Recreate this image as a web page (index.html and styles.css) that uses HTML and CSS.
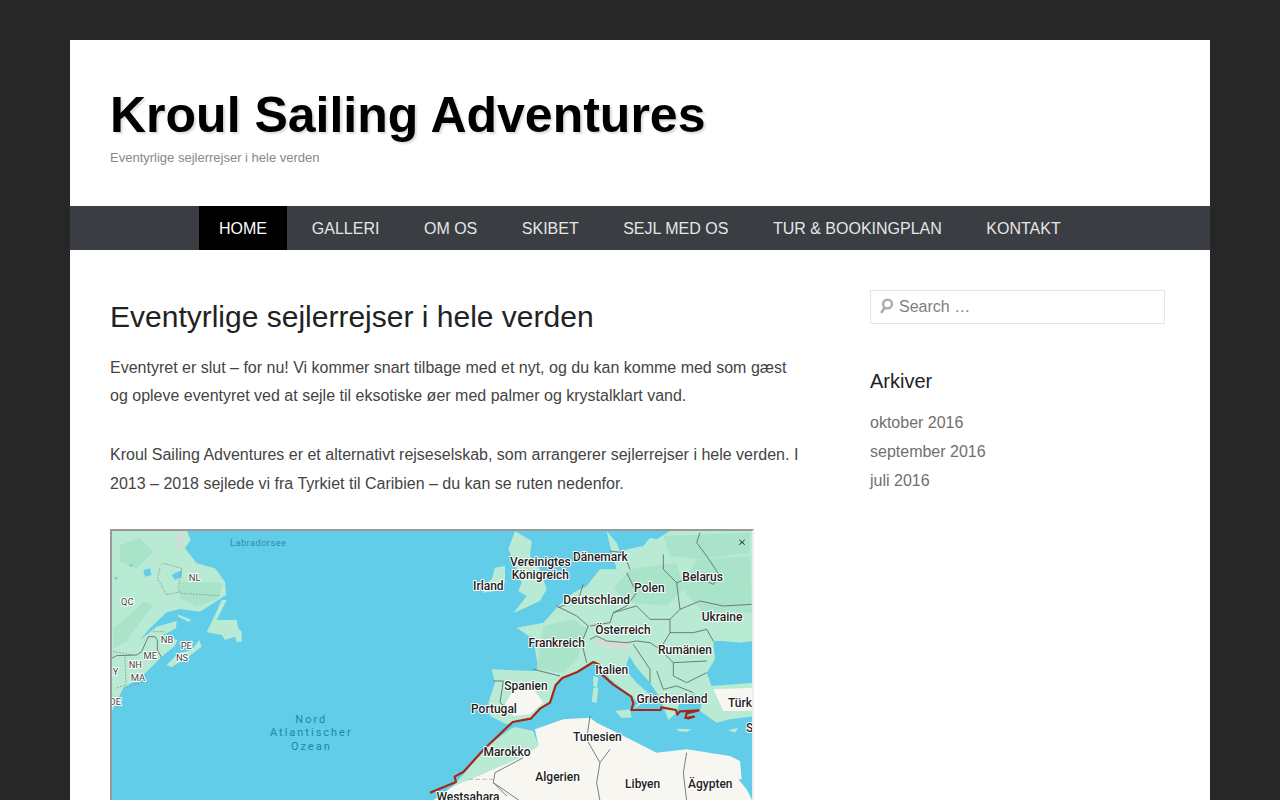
FILE: index.html
```html
<!DOCTYPE html>
<html lang="da">
<head>
<meta charset="utf-8">
<title>Kroul Sailing Adventures</title>
<link rel="stylesheet" href="styles.css">
</head>
<body>
<div class="page">
  <header class="masthead">
    <h1 class="site-title">Kroul Sailing Adventures</h1>
    <p class="site-desc">Eventyrlige sejlerrejser i hele verden</p>
  </header>
  <nav class="nav">
    <a class="nav-item active" href="#">HOME</a>
    <a class="nav-item" href="#">GALLERI</a>
    <a class="nav-item" href="#">OM OS</a>
    <a class="nav-item" href="#">SKIBET</a>
    <a class="nav-item" href="#">SEJL MED OS</a>
    <a class="nav-item" href="#">TUR &amp; BOOKINGPLAN</a>
    <a class="nav-item" href="#">KONTAKT</a>
  </nav>
  <div class="content">
    <main class="main">
      <h2 class="entry-title">Eventyrlige sejlerrejser i hele verden</h2>
      <p class="para">Eventyret er slut – for nu! Vi kommer snart tilbage med et nyt, og du kan komme med som gæst og opleve eventyret ved at sejle til eksotiske øer med palmer og krystalklart vand.</p>
      <p class="para">Kroul Sailing Adventures er et alternativt rejseselskab, som arrangerer sejlerrejser i hele verden. I 2013 – 2018 sejlede vi fra Tyrkiet til Caribien – du kan se ruten nedenfor.</p>
      <div class="map-frame">
      <svg class="map" viewBox="0 0 640 478" xmlns="http://www.w3.org/2000/svg">
        <rect class="water" width="640" height="478"/>
        <g transform="translate(-12,-6) scale(.33333)">
          <g class="soft">
            <path class="land" d="M35 15H260L272 45 255 70 290 115 345 130 375 170 378 210 355 225 300 260 240 252 200 262 150 310 120 345 170 305 230 288 228 310 180 335 232 345 225 362 185 395 130 450 70 490 35 560Z"/>
            <path class="land" d="M200 420 235 385 275 375 298 345 305 365 265 395 215 427Z"/>
            <path class="land" d="M238 352 265 352 262 362 240 360Z"/>
            <path class="land" d="M365 225 380 225 350 285 410 285 415 310 425 320 425 350 410 350 405 335 375 345 365 330 320 322 345 270Z"/>
            <path class="land" d="M232 268 275 285 265 290 235 275Z"/>
            <path class="land2" d="M40 310 100 260 130 230 160 240 120 290 80 350 40 370Z"/>
            <path class="land2" d="M240 170 300 170 370 175 355 220 290 245 240 220Z"/>
            <path class="land2" d="M60 60 120 40 160 80 110 130 60 110Z"/>
          </g>
          <path class="lake" d="M130 135 150 130 155 150 135 155ZM215 150 245 135 245 155 225 165ZM40 158 52 155 50 165ZM85 120 100 118 96 126Z"/>
          <path class="rock" d="M232 25 250 22 250 50 240 75 230 55Z"/>
          <path class="bdr-d" d="M185 120 190 115 245 130 235 190 240 205 360 212M180 130 172 160 200 210 240 200M40 380 100 390M75 395 78 480 45 490M70 490 130 470M160 320 195 320"/>
          <path class="bdr" d="M35 400 50 392 110 390 125 380 145 335 165 335 172 345 172 375 185 398"/>
          <text class="t-small" x="390" y="63" textLength="168">Labradorsee</text>
          <text class="t-ocean" x="634" y="595">Nord</text>
          <text class="t-ocean" x="634" y="634">Atlantischer</text>
          <text class="t-ocean" x="634" y="674">Ozean</text>
          <text class="t-st" x="82" y="241">QC</text>
          <text class="t-st" x="284" y="168">NL</text>
          <text class="t-st" x="201" y="355">NB</text>
          <text class="t-st" x="259" y="373">PE</text>
          <text class="t-st" x="246" y="409">NS</text>
          <text class="t-st" x="151" y="403">ME</text>
          <text class="t-st" x="106" y="430">NH</text>
          <text class="t-st" x="114" y="467">MA</text>
          <text class="t-st" x="43" y="450">IY</text>
          <text class="t-st" x="46" y="541">DE</text>
        </g>
        <g transform="translate(318,-5) scale(.33333)">
          <g class="soft">
            <path class="land" d="M530 15 560 50 575 90 590 70 640 60 660 35 680 40 720 15H975V345L930 350 880 345 850 345 855 400 830 440 845 480 975 470V570L900 580 860 590 810 555 820 510 790 505 750 525 740 560 715 582 690 515 660 470 620 425 598 390 585 430 620 470 670 515 630 505 640 530 610 550 625 530 590 500 540 460 505 420 490 410 445 440 395 455 375 475 360 525 330 545 300 580 255 585 230 595 180 570 175 530 195 470 185 430 310 435 325 430 310 340 260 305 340 290 385 240 430 200 470 180 510 130 560 130 540 60Z"/>
            <path class="land" d="M255 15 305 45 300 90 330 130 350 190 330 225 250 262 290 210 265 195 275 170 260 130 235 70Z"/>
            <path class="land" d="M195 125 225 120 225 170 195 195 160 200 165 175 185 160Z"/>
            <path class="land" d="M490 450 505 455 500 485 490 480ZM490 485 505 485 500 530 485 528Z"/>
            <path class="land" d="M555 555 600 550 605 575 575 575Z"/>
            <path class="land" d="M740 608 785 610 770 618 745 615ZM895 612 925 605 915 620Z"/>
            <path class="land2" d="M600 130 740 110 760 190 710 240 600 230 550 190ZM800 100 960 90 965 260 820 260 750 180ZM340 300 430 280 470 310 440 400 400 440 320 430Z"/>
            <path class="land2" d="M700 30 960 20 960 80 800 100 720 90Z"/>
            <path class="rock" d="M505 335 540 345 605 352 590 370 520 362 495 358Z"/>
            <path class="sand" d="M250 490 315 495 340 530 300 565 250 570 225 535Z"/>
            <path class="sand" d="M850 490 975 485V555H880Z"/>
            <path class="land" d="M240 610 255 603 310 615 325 660 280 690 190 730 120 760 70 780 130 710 160 670Z"/>
            <path class="sand" d="M315 610 400 580 480 575 500 590 540 610 600 640 680 680 770 670 900 690 930 705 935 760 975 830H0L70 780 120 760 190 730 280 690 325 660Z"/>
            <path class="water" d="M925 760 975 760V830H970L950 790Z"/>
          </g>
          <path class="bdr" d="M460 175 445 220 385 245M380 240 440 270 475 300 455 350M455 350 470 410M480 300 540 290 550 260 590 240 620 200 590 140M550 260 620 240 660 280 720 280 750 250 740 170 700 130 700 85M740 170 800 150 850 175 870 150 830 90 800 50 810 20M750 250 810 225 880 240 965 235M720 280 720 320 690 370 660 350 620 345 590 350 530 345 500 330 480 340M720 320 790 320 830 310 850 345M690 370 730 410 830 405M730 410 730 450 770 470 830 440M610 355 660 430 660 470M680 435 700 490 740 480 790 500M310 430 390 450M190 465 220 465 210 530 230 545M540 75 580 80 600 130M480 570 470 640 510 710 500 770 510 825M510 710 540 670M770 680 760 740 770 825M280 695 195 740 190 770 270 825M190 770 230 810"/>
          <path class="bdr-gd" d="M115 760H190"/>
          <path class="bdr-x" d="M928 42 944 56M944 42 928 56"/>
          <path class="route" d="M0 800 78 768 74 752 100 738 162 670 248 588 302 578 330 548 360 530 377 478 397 456 442 438 490 408 508 416 516 446 550 476 604 512 610 532 604 552 692 552 694 544 738 552 742 566 750 556 806 553 770 562 766 576 792 572 772 578"/>
          <text class="t-c" x="331" y="121">Vereinigtes</text>
          <text class="t-c" x="331" y="158">Königreich</text>
          <text class="t-c" x="511" y="106">Dänemark</text>
          <text class="t-c" x="175" y="191">Irland</text>
          <text class="t-c" x="818" y="166">Belarus</text>
          <text class="t-c" x="658" y="197">Polen</text>
          <text class="t-c" x="500" y="233">Deutschland</text>
          <text class="t-c" x="876" y="284">Ukraine</text>
          <text class="t-c" x="579" y="323">Österreich</text>
          <text class="t-c" x="380" y="362">Frankreich</text>
          <text class="t-c" x="765" y="383">Rumänien</text>
          <text class="t-c" x="545" y="443">Italien</text>
          <text class="t-c" x="288" y="491">Spanien</text>
          <text class="t-c" x="726" y="530">Griechenland</text>
          <text class="t-c" x="930" y="542">Türk</text>
          <text class="t-c" x="192" y="560">Portugal</text>
          <text class="t-c" x="959" y="619">S</text>
          <text class="t-c" x="502" y="644">Tunesien</text>
          <text class="t-c" x="231" y="689">Marokko</text>
          <text class="t-c" x="383" y="765">Algerien</text>
          <text class="t-c" x="638" y="785">Libyen</text>
          <text class="t-c" x="841" y="785">Ägypten</text>
          <text class="t-c" x="114" y="826">Westsahara</text>
        </g>
      </svg>
      </div>
    </main>
    <aside class="sidebar">
      <form class="search">
        <svg class="search-icon" viewBox="0 0 14 16" xmlns="http://www.w3.org/2000/svg"><circle cx="8.5" cy="6" r="4.4"/><path d="M5.8 9.5 2.2 15"/></svg>
        <input class="search-input" type="search" placeholder="Search …">
      </form>
      <h3 class="widget-title">Arkiver</h3>
      <ul class="archive">
        <li><a href="#">oktober 2016</a></li>
        <li><a href="#">september 2016</a></li>
        <li><a href="#">juli 2016</a></li>
      </ul>
    </aside>
  </div>
</div>
</body>
</html>
```
FILE: styles.css
```css
html, body { margin: 0; height: 100%; overflow: hidden; }
body { background: #272727; font-family: "Liberation Sans", Arial, sans-serif; color: #444; }
a { text-decoration: none; }
.page { width: 1140px; margin: 40px auto 0; background: #fff; box-sizing: border-box; min-height: 1100px; }
.masthead { padding: 40px 40px 0; height: 166px; box-sizing: border-box; }
.site-title { margin: 0; font-size: 50px; line-height: 70px; font-weight: 700; color: #000; text-shadow: 2px 2px 2px #ddd; }
.site-desc { margin: -2px 0 0; font-size: 13px; line-height: 20px; color: #888; }
.nav { height: 44px; background: #3a3d42; display: flex; padding-left: 129px; }
.nav-item { display: block; padding: 0 22.25px; font-size: 16px; line-height: 45px; color: #e6e6e6; }
.nav-item.active { background: #000; color: #fff; padding: 0 20px; margin-right: 2.6px; }
.content { display: flex; padding: 40px 45px 0 40px; justify-content: space-between; }
.main { width: 690px; }
.entry-title { margin: 7px 0 16.6px; font-size: 30px; line-height: 40px; font-weight: 400; color: #222; }
.para { margin: 0 0 30px; font-size: 16px; line-height: 28.8px; color: #444; }
.map-frame { width: 644px; height: 480px; box-sizing: border-box; border-top: 2px solid #999; border-left: 2px solid #999; border-right: 2px solid #eee; }
.map { display: block; width: 640px; height: 478px; }
.soft { filter: blur(1.5px); }
.water { fill: #62cde8; }
.land { fill: #b8ead4; }
.land2 { fill: #a9e4ca; }
.lake { fill: #62cde8; }
.rock { fill: #d5dcd8; }
.sand { fill: #f8f6f1; }
.bdr { fill: none; stroke: #5b5f5e; stroke-width: 2.4; }
.bdr-d { fill: none; stroke: #8b8f8e; stroke-width: 2.4; stroke-dasharray: 5 4; }
.bdr-gd { fill: none; stroke: #bbb; stroke-width: 3; stroke-dasharray: 14 7; }
.bdr-x { fill: none; stroke: #222; stroke-width: 3; }
.route { fill: none; stroke: #a52714; stroke-width: 6.5; stroke-linejoin: round; }
.t-c, .t-st { font-family: Roboto, sans-serif; text-anchor: middle; paint-order: stroke; stroke: #fff; stroke-linejoin: round; }
.t-c { font-size: 36px; font-weight: 500; fill: #222; stroke-width: 6; }
.t-st { font-size: 28px; fill: #444; stroke-width: 6; }
.t-small { font-family: Roboto, sans-serif; font-size: 28px; fill: #2a8ea6; }
.t-ocean { font-family: Roboto, sans-serif; font-size: 33px; letter-spacing: 6px; fill: #1f87a2; text-anchor: middle; }
.sidebar { width: 295px; }
.search { position: relative; display: block; }
.search-input { display: block; width: 100%; height: 34px; box-sizing: border-box; border: 1px solid #e5e5e5; padding: 0 8px 0 28px; font: 16px "Liberation Sans", Arial, sans-serif; color: #555; outline: none; background: #fff; appearance: none; -webkit-appearance: none; }
.search-input::placeholder { color: #808080; opacity: 1; }
.search-icon { position: absolute; left: 9px; top: 8px; width: 14px; height: 16px; fill: none; stroke: #aaa; stroke-width: 2.4; }
.widget-title { margin: 44px 0 15.4px; font-size: 20px; line-height: 26px; font-weight: 400; color: #222; }
.archive { list-style: none; margin: 0; padding: 0; font-size: 16px; line-height: 28.6px; }
.archive a { color: #707070; }
```
